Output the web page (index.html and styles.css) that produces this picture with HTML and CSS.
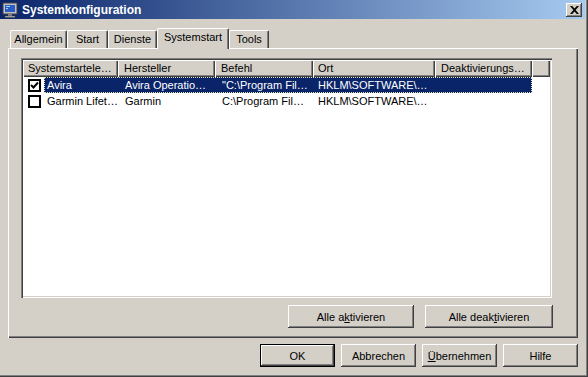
FILE: index.html
```html
<!DOCTYPE html>
<html lang="de">
<head>
    <meta charset="UTF-8">
    <title>Systemkonfiguration</title>
    <link rel="stylesheet" href="styles.css">
</head>
<body>
    <div class="window">
        <div class="titlebar">
            <svg class="title-icon" width="16" height="16" viewBox="0 0 16 16">
                <rect x="1" y="1" width="14" height="11" fill="#c0c0c0" stroke="#404040"/>
                <rect x="3" y="3" width="10" height="7" fill="#2a5cc8"/>
                <path d="M4 4h4v1H4z M4 6h2v1H4z" fill="#9fd0ff"/>
                <rect x="6" y="12" width="4" height="2" fill="#808080"/>
                <rect x="3" y="14" width="10" height="1.5" fill="#c0c0c0" stroke="#404040" stroke-width="0.5"/>
            </svg>
            <span class="title-text">Systemkonfiguration</span>
            <div class="close">
                <svg width="9" height="8" viewBox="0 0 9 8">
                    <path d="M0 0h2.2l2.3 2.6L6.8 0H9L5.6 4 9 8H6.8L4.5 5.4 2.2 8H0l3.4-4z" fill="#000"/>
                </svg>
            </div>
        </div>

        <div class="tabs">
            <div class="tab w-allg">Allgemein</div>
            <div class="tab w-start">Start</div>
            <div class="tab w-dienste">Dienste</div>
            <div class="tab active w-sys">Systemstart</div>
            <div class="tab w-tools">Tools</div>
        </div>

        <div class="panel">
            <div class="listview">
                <div class="lv-header">
                    <div class="hcell c1">Systemstartele…</div>
                    <div class="hcell c2">Hersteller</div>
                    <div class="hcell c3">Befehl</div>
                    <div class="hcell c4">Ort</div>
                    <div class="hcell c5">Deaktivierungs…</div>
                    <div class="hcell c6"></div>
                </div>

                <div class="lv-row">
                    <div class="check-cell"><span class="checkbox checked">
                        <svg width="9" height="9" viewBox="0 0 9 9"><path d="M1 4l2.5 2.5L8 1.5" fill="none" stroke="#000" stroke-width="2"/></svg>
                    </span></div>
                    <div class="row-body selected">
                        <div class="cell c1b">Avira</div>
                        <div class="cell c2">Avira Operatio…</div>
                        <div class="cell c3">"C:\Program Fil…</div>
                        <div class="cell c4">HKLM\SOFTWARE\…</div>
                        <div class="cell c5"></div>
                    </div>
                </div>

                <div class="lv-row">
                    <div class="check-cell"><span class="checkbox"></span></div>
                    <div class="row-body">
                        <div class="cell c1b">Garmin Lifet…</div>
                        <div class="cell c2">Garmin</div>
                        <div class="cell c3">C:\Program Fil…</div>
                        <div class="cell c4">HKLM\SOFTWARE\…</div>
                        <div class="cell c5"></div>
                    </div>
                </div>
            </div>

            <div class="panel-buttons">
                <button class="btn w-akt">Alle a<u>k</u>tivieren</button>
                <button class="btn w-deakt">Alle deak<u>t</u>ivieren</button>
            </div>
        </div>

        <div class="dialog-buttons">
            <button class="btn default">OK</button>
            <button class="btn">Abbrechen</button>
            <button class="btn"><u>Ü</u>bernehmen</button>
            <button class="btn">Hilfe</button>
        </div>
    </div>
</body>
</html>
```

FILE: styles.css
```css
body {
    margin: 0;
    font-family: "Liberation Sans", Arial, sans-serif;
    font-size: 11px;
    color: #000;
    background-color: #d4d0c8;
}
.window {
    width: 588px;
    height: 377px;
    box-sizing: border-box;
    padding-right: 3px;
    background-color: #d4d0c8;
    box-shadow: inset -1px -1px #404040, inset -2px -2px #808080;
    display: flex;
    flex-direction: column;
}

/* title bar */
.titlebar {
    height: 19px;
    display: flex;
    align-items: center;
    padding-left: 2px;
    background: linear-gradient(to right, #0a246a, #a6caf0);
    color: #fff;
    font-size: 12px;
    font-weight: bold;
}
.title-icon {
    margin-right: 4px;
}
.title-text {
    flex: 1;
}
.close {
    width: 16px;
    height: 14px;
    margin-right: 3px;
    box-sizing: border-box;
    display: flex;
    align-items: center;
    justify-content: center;
    background-color: #d4d0c8;
    box-shadow: inset -1px -1px #404040, inset 1px 1px #fff, inset -2px -2px #808080;
}

/* tabs */
.tabs {
    height: 20px;
    margin-top: 9px;
    padding-left: 10px;
    display: flex;
    align-items: flex-end;
    position: relative;
    z-index: 1;
}
.tab {
    height: 18px;
    box-sizing: border-box;
    padding-top: 2px;
    text-align: center;
    background-color: #d4d0c8;
    border-top: 1px solid #fff;
    border-left: 1px solid #fff;
    border-right: 1px solid #404040;
    box-shadow: inset -1px 0 #808080;
    border-radius: 2px 2px 0 0;
}
.tab.active {
    height: 21px;
    margin-bottom: -1px;
    padding-top: 2px;
}
.w-allg { width: 57px; }
.w-start { width: 41px; }
.w-dienste { width: 49px; }
.w-sys { width: 72px; }
.w-tools { width: 40px; }

/* tab page */
.panel {
    width: 570px;
    height: 290px;
    margin-left: 8px;
    box-sizing: border-box;
    padding: 10px 25px 0 13px;
    box-shadow: inset 1px 1px #fff, inset -1px -1px #404040, inset -2px -2px #808080;
}
.listview {
    width: 531px;
    height: 240px;
    box-sizing: border-box;
    padding: 2px;
    background-color: #fff;
    box-shadow: inset 1px 1px #808080, inset 2px 2px #404040, inset -1px -1px #fff, inset -2px -2px #d4d0c8;
    overflow: hidden;
}
.lv-header {
    display: flex;
    height: 17px;
}
.hcell {
    box-sizing: border-box;
    height: 17px;
    line-height: 16px;
    padding-left: 5px;
    white-space: nowrap;
    overflow: hidden;
    background-color: #d4d0c8;
    box-shadow: inset 1px 1px #fff, inset -1px -1px #404040, inset -2px -2px #808080;
}
.c1 { width: 95px; }
.c2 { width: 97px; }
.c3 { width: 98px; }
.c4 { width: 122px; }
.c5 { width: 97px; }
.c6 { width: 18px; }
.c1b { width: 74px; }
.hcell.c2, .hcell.c3, .hcell.c5 { padding-left: 6px; }

.lv-row {
    display: flex;
    height: 16px;
}
.check-cell {
    width: 21px;
    display: flex;
    align-items: center;
    padding-left: 5px;
    box-sizing: border-box;
}
.checkbox {
    width: 13px;
    height: 13px;
    box-sizing: border-box;
    border: 2px solid #000;
    background-color: #fff;
    display: flex;
    align-items: center;
    justify-content: center;
}
.row-body {
    display: flex;
    height: 16px;
    line-height: 16px;
}
.row-body.selected {
    background-color: #0a246a;
    color: #fff;
    outline: 1px dotted #e8e4b0;
    outline-offset: -1px;
}
.cell {
    box-sizing: border-box;
    padding-left: 7px;
    white-space: nowrap;
    overflow: hidden;
}
.cell.c1b { padding-left: 3px; }
.cell.c4 { padding-left: 5px; }

/* buttons */
.btn {
    height: 23px;
    padding: 0;
    border: none;
    font-family: inherit;
    font-size: 11px;
    color: #000;
    background-color: #d4d0c8;
    box-shadow: inset -1px -1px #404040, inset 1px 1px #fff, inset -2px -2px #808080;
}
.btn.default {
    box-shadow: inset 0 0 0 1px #000, inset -2px -2px #404040, inset 2px 2px #fff, inset -3px -3px #808080;
}
.panel-buttons {
    display: flex;
    justify-content: flex-end;
    gap: 11px;
    margin-top: 7px;
}
.w-akt { width: 126px; }
.w-deakt { width: 128px; }
.dialog-buttons {
    display: flex;
    justify-content: flex-end;
    gap: 6px;
    margin-top: 6px;
    padding-right: 7px;
}
.dialog-buttons .btn {
    width: 75px;
}
```
